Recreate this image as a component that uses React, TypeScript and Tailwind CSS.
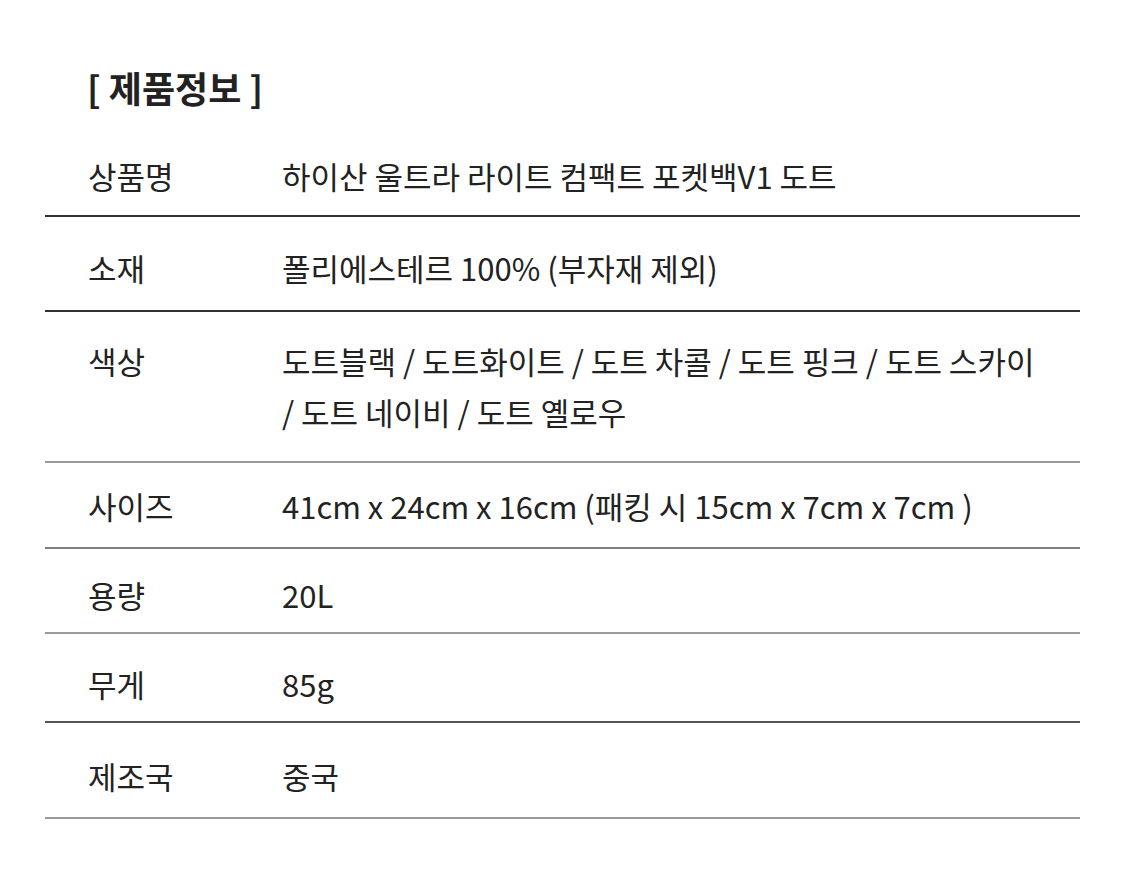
import React from "react";

type Row = {
  label: string;
  value: React.ReactNode;
  pt: string;
  pb: string;
  border: string;
};

const rows: Row[] = [
  { label: "상품명", value: "하이산 울트라 라이트 컴팩트 포켓백V1 도트", pt: "pt-[40px]", pb: "pb-[14px]", border: "border-[#333333]" },
  { label: "소재", value: "폴리에스테르 100% (부자재 제외)", pt: "pt-[25px]", pb: "pb-[17px]", border: "border-[#333333]" },
  {
    label: "색상",
    value: (
      <>
        도트블랙 / 도트화이트 / 도트 차콜 / 도트 핑크 / 도트 스카이
        <br />/ 도트 네이비 / 도트 옐로우
      </>
    ),
    pt: "pt-[23px]",
    pb: "pb-[24px]",
    border: "border-[#9a9a9a]",
  },
  { label: "사이즈", value: "41cm x 24cm x 16cm (패킹 시 15cm x 7cm x 7cm )", pt: "pt-[17px]", pb: "pb-[16px]", border: "border-[#808080]" },
  { label: "용량", value: "20L", pt: "pt-[20px]", pb: "pb-[12px]", border: "border-[#9a9a9a]" },
  { label: "무게", value: "85g", pt: "pt-[24px]", pb: "pb-[12px]", border: "border-[#555555]" },
  { label: "제조국", value: "중국", pt: "pt-[27px]", pb: "pb-[16px]", border: "border-[#9a9a9a]" },
];

export default function App() {
  return (
    <div
      className="w-[1125px] h-[881px] bg-white text-[#222222] overflow-hidden"
      style={{ fontFamily: '"Noto Sans CJK KR", "Noto Sans", sans-serif' }}
    >
      <div className="pt-[67px] pl-[87px] text-[36px] leading-[40px] font-bold">[ 제품정보 ]</div>
      <div className="mx-[45px] mt-[3px] w-[1035px]">
        {rows.map((r, i) => (
          <div key={i} className={`grid grid-cols-[238px_1fr] border-b-2 ${r.border} ${r.pt} ${r.pb}`}>
            <div className="pl-[43px] text-[31px] leading-[51px] whitespace-nowrap">{r.label}</div>
            <div className="-ml-[1px] text-[31px] leading-[51px] whitespace-nowrap">{r.value}</div>
          </div>
        ))}
      </div>
    </div>
  );
}
